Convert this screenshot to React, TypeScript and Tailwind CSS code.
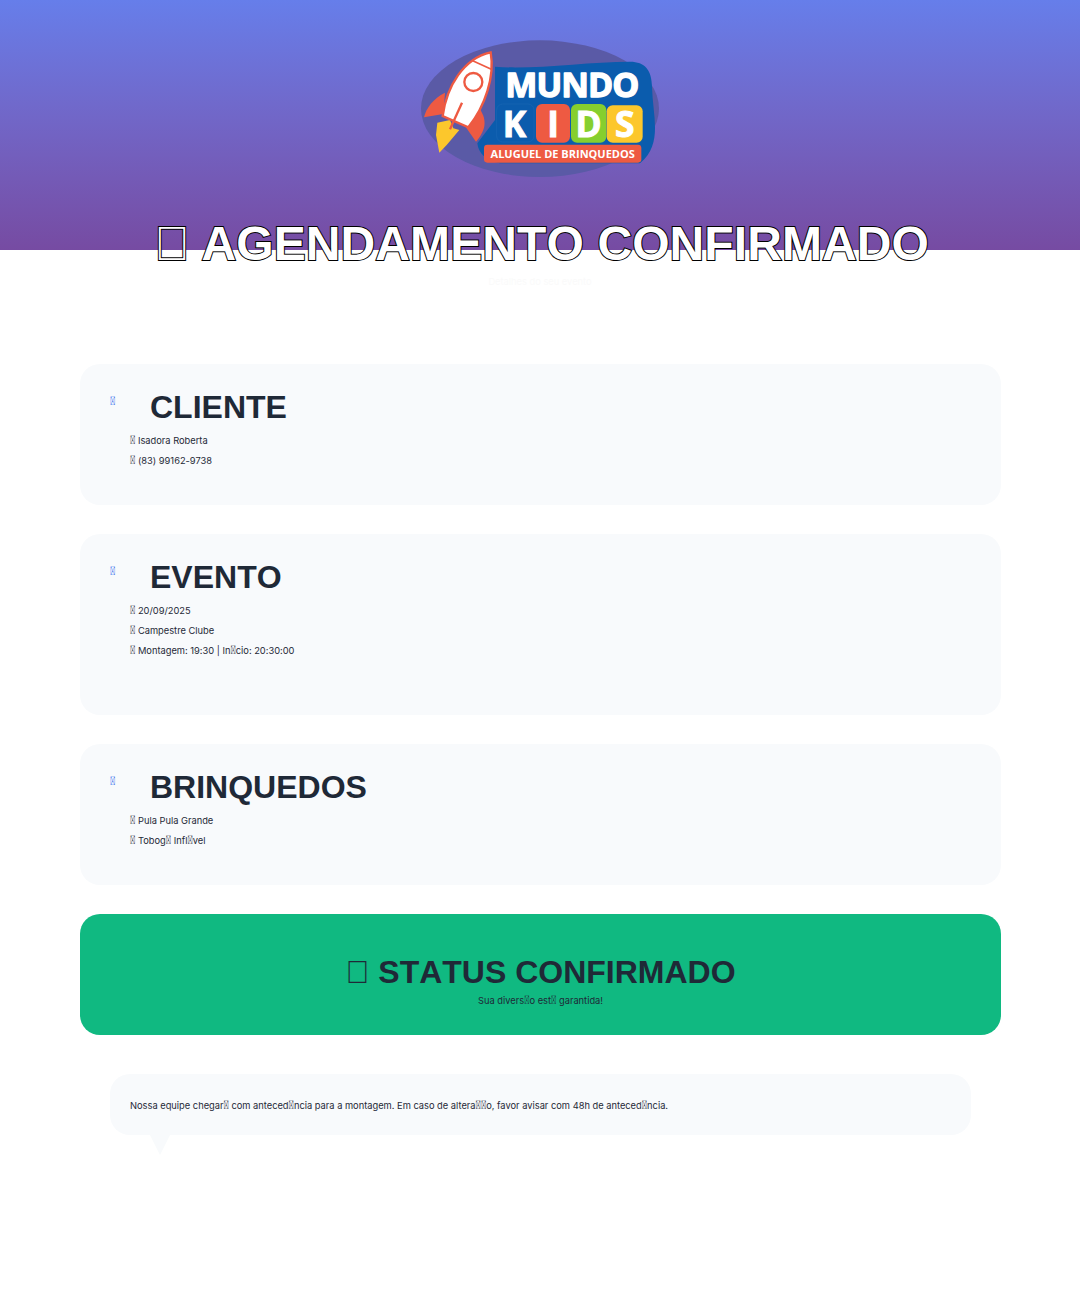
import React from "react";

const logoFont = "'Open Sans', sans-serif";
const TOFU = "\u{E000}";

const Logo = () => (
  <svg viewBox="0 0 840 510" className="w-[280px] h-[170px] shrink-0" aria-label="Mundo Kids">
    <ellipse cx="420" cy="266" rx="357" ry="205" fill="#5a5aa6" />
    <path d="M285 140 C400 150 560 125 690 125 C735 125 755 150 756 200 C758 290 790 370 720 430 L300 430 C260 425 235 400 232 370 L285 300 Z" fill="#0b5cad" />
    <rect x="290" y="252" width="112" height="114" rx="18" fill="none" stroke="#1a66b3" strokeWidth="2" />
    <path d="M135 218 C100 235 78 265 72 292 L130 282 Z" fill="#ee5a42" />
    <path d="M235 260 C260 295 262 325 228 365 L195 318 Z" fill="#ee5a42" />
    <path d="M150 300 L112 308 L108 345 L118 398 L140 375 L178 330 L160 325 Z" fill="#fcc72c" />
    <path d="M128 288 C140 200 190 115 272 97 C285 170 255 260 205 322 Z" fill="#fff" stroke="#ee5a42" strokeWidth="7" />
    <path d="M218 122 L274 148" stroke="#ee5a42" strokeWidth="5" fill="none" />
    <circle cx="220" cy="186" r="27" fill="#fff" stroke="#ee5a42" strokeWidth="7" />
    <path d="M186 248 L150 328" stroke="#ee5a42" strokeWidth="7" fill="none" />
    <text x="316" y="230" fill="#fff" stroke="#fff" strokeWidth="4" strokeLinejoin="round" fontSize="102" fontWeight="700" fontFamily={logoFont} textLength="402">MUNDO</text>
    <text x="308" y="350" fill="#fff" stroke="#fff" strokeWidth="3" fontSize="106" fontWeight="700" fontFamily={logoFont}>K</text>
    <rect x="408" y="252" width="102" height="116" rx="18" fill="#ee5a42" />
    <rect x="513" y="252" width="106" height="116" rx="18" fill="#86cf2e" />
    <rect x="620" y="256" width="108" height="112" rx="18" fill="#fcc72c" />
    <text x="459" y="350" fill="#fff" stroke="#fff" strokeWidth="3" fontSize="106" fontWeight="700" textAnchor="middle" fontFamily={logoFont}>I</text>
    <text x="566" y="350" fill="#fff" stroke="#fff" strokeWidth="3" fontSize="106" fontWeight="700" textAnchor="middle" fontFamily={logoFont}>D</text>
    <text x="674" y="350" fill="#fff" stroke="#fff" strokeWidth="3" fontSize="106" fontWeight="700" textAnchor="middle" fontFamily={logoFont}>S</text>
    <rect x="252" y="374" width="472" height="54" rx="10" fill="#ee5a42" />
    <text x="488" y="413" fill="#fff" fontSize="33" fontWeight="700" textAnchor="middle" fontFamily={logoFont}>ALUGUEL DE BRINQUEDOS</text>
  </svg>
);

// small text: the missing glyphs sit at a slightly bigger size than the words
const Small = ({ text }: { text: string }) => (
  <>
    {text.split(TOFU).map((part, i) => (
      <React.Fragment key={i}>
        {i > 0 && <span className="font-['Roboto',sans-serif] text-[12px] leading-[0]">{TOFU}</span>}
        {part}
      </React.Fragment>
    ))}
  </>
);

const Card = ({ title, lines, extra }: { title: string; lines: string[]; extra?: boolean }) => (
  <section className={`bg-[#f8fafc] rounded-[20px] pl-[30px] pt-[21px] ${extra ? "pb-[54px]" : "pb-[34px]"} mb-[29px]`}>
    <div className="flex items-start">
      <span className="w-[40px] font-['Roboto',sans-serif] text-[#2563eb] text-[12px] leading-[32px]">{TOFU}</span>
      <h2 className="font-['Liberation_Sans',sans-serif] [font-kerning:none] font-bold text-[32px] leading-[44px] text-[#1f2937]">{title}</h2>
    </div>
    <div className="pl-[20px] pt-[2px] text-[9.3px] leading-[20px] text-[#1f2937]">
      {lines.map((l) => (
        <p key={l}>
          <Small text={l} />
        </p>
      ))}
    </div>
  </section>
);

export default function App() {
  return (
    <div className="w-[1080px] h-[1314px] bg-white font-['Inter',sans-serif] overflow-hidden [text-rendering:optimizeSpeed]">
      <header className="h-[250px] bg-gradient-to-b from-[#667eea] to-[#764ba2] flex flex-col items-center pt-[20px]">
        <Logo />
        <h1 className="mt-[26px] pl-[3px] shrink-0 whitespace-nowrap font-['Liberation_Sans',sans-serif] [font-kerning:none] tracking-[0.1px] font-bold text-[48px] leading-[56px] text-white [-webkit-text-stroke:2px_black] [paint-order:stroke_fill]">
          <span className="-mr-[2px]">{TOFU}</span>
          {" AGENDAMENTO CONFIRMADO"}
        </h1>
        <p className="shrink-0 text-[9.3px] leading-[20px] text-[#fafafa]">Detalhes do seu evento</p>
      </header>

      <main className="pl-[80px] pr-[79px] pt-[114px]">
        <Card title="CLIENTE" lines={[`${TOFU} Isadora Roberta`, `${TOFU} (83) 99162-9738`]} />
        <Card extra title="EVENTO" lines={[`${TOFU} 20/09/2025`, `${TOFU} Campestre Clube`, `${TOFU} Montagem: 19:30 | In${TOFU}cio: 20:30:00`]} />
        <Card title="BRINQUEDOS" lines={[`${TOFU} Pula Pula Grande`, `${TOFU} Tobog${TOFU} Infl${TOFU}vel`]} />

        <section className="bg-[#10b981] rounded-[20px] h-[121px] flex flex-col items-center pt-[38px] text-[#1f2937]">
          <h2 className="font-['Liberation_Sans',sans-serif] [font-kerning:none] font-bold text-[32px] leading-[40px]">{`${TOFU} STATUS CONFIRMADO`}</h2>
          <p className="pt-[1px] text-[9.3px] leading-[16px]">
            <Small text={`Sua divers${TOFU}o est${TOFU} garantida!`} />
          </p>
        </section>

        <div className="relative mx-[30px] mt-[39px] h-[61px] bg-[#f8fafc] rounded-[20px] px-[20px] pt-[1px] text-[9.3px] leading-[61px] text-[#1f2937]">
          <Small text={`Nossa equipe chegar${TOFU} com anteced${TOFU}ncia para a montagem. Em caso de altera${TOFU}${TOFU}o, favor avisar com 48h de anteced${TOFU}ncia.`} />
          <span className="absolute left-[40px] top-full border-x-[10px] border-x-transparent border-t-[20px] border-t-[#f8fafc]" />
        </div>
      </main>
    </div>
  );
}
